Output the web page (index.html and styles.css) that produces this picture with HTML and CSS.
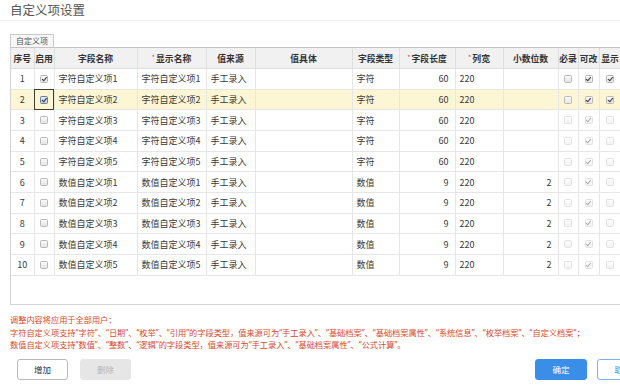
FILE: index.html
```html
<!DOCTYPE html>
<html lang="zh-CN">
<head>
<meta charset="utf-8">
<title>自定义项设置</title>
<link rel="stylesheet" href="styles.css">
</head>
<body>
<div class="page">
  <div class="title">自定义项设置</div>
  <div class="tabs"><span class="tab">自定义项</span></div>
  <div class="grid">
    <table class="tbl">
      <colgroup>
        <col class="c-no"><col class="c-en"><col class="c-name"><col class="c-disp"><col class="c-src">
        <col class="c-val"><col class="c-type"><col class="c-len"><col class="c-wid"><col class="c-dec">
        <col class="c-req"><col class="c-mod"><col class="c-show">
      </colgroup>
      <thead>
        <tr>
          <th>序号</th><th>启用</th><th>字段名称</th><th><span class="req">*</span>显示名称</th><th>值来源</th>
          <th>值具体</th><th>字段类型</th><th><span class="req">*</span>字段长度</th><th><span class="req">*</span>列宽</th><th>小数位数</th>
          <th>必录</th><th>可改</th><th>显示</th>
        </tr>
      </thead>
      <tbody>
        <tr>
          <td class="ctr">1</td><td class="ctr"><span class="cb on"></span></td><td>字符自定义项1</td><td>字符自定义项1</td><td>手工录入</td>
          <td></td><td>字符</td><td class="num">60</td><td>220</td><td class="num"></td>
          <td class="ctr"><span class="cb"></span></td><td class="ctr"><span class="cb on"></span></td><td class="ctr"><span class="cb on"></span></td>
        </tr>
        <tr class="sel">
          <td class="ctr">2</td><td class="ctr focus"><span class="cb on active"></span></td><td>字符自定义项2</td><td>字符自定义项2</td><td>手工录入</td>
          <td></td><td>字符</td><td class="num">60</td><td>220</td><td class="num"></td>
          <td class="ctr"><span class="cb"></span></td><td class="ctr"><span class="cb on"></span></td><td class="ctr"><span class="cb on"></span></td>
        </tr>
        <tr>
          <td class="ctr">3</td><td class="ctr"><span class="cb"></span></td><td>字符自定义项3</td><td>字符自定义项3</td><td>手工录入</td>
          <td></td><td>字符</td><td class="num">60</td><td>220</td><td class="num"></td>
          <td class="ctr"><span class="cb dis"></span></td><td class="ctr"><span class="cb on dis"></span></td><td class="ctr"><span class="cb dis"></span></td>
        </tr>
        <tr>
          <td class="ctr">4</td><td class="ctr"><span class="cb"></span></td><td>字符自定义项4</td><td>字符自定义项4</td><td>手工录入</td>
          <td></td><td>字符</td><td class="num">60</td><td>220</td><td class="num"></td>
          <td class="ctr"><span class="cb dis"></span></td><td class="ctr"><span class="cb on dis"></span></td><td class="ctr"><span class="cb dis"></span></td>
        </tr>
        <tr>
          <td class="ctr">5</td><td class="ctr"><span class="cb"></span></td><td>字符自定义项5</td><td>字符自定义项5</td><td>手工录入</td>
          <td></td><td>字符</td><td class="num">60</td><td>220</td><td class="num"></td>
          <td class="ctr"><span class="cb dis"></span></td><td class="ctr"><span class="cb on dis"></span></td><td class="ctr"><span class="cb dis"></span></td>
        </tr>
        <tr>
          <td class="ctr">6</td><td class="ctr"><span class="cb"></span></td><td>数值自定义项1</td><td>数值自定义项1</td><td>手工录入</td>
          <td></td><td>数值</td><td class="num">9</td><td>220</td><td class="num">2</td>
          <td class="ctr"><span class="cb dis"></span></td><td class="ctr"><span class="cb on dis"></span></td><td class="ctr"><span class="cb dis"></span></td>
        </tr>
        <tr>
          <td class="ctr">7</td><td class="ctr"><span class="cb"></span></td><td>数值自定义项2</td><td>数值自定义项2</td><td>手工录入</td>
          <td></td><td>数值</td><td class="num">9</td><td>220</td><td class="num">2</td>
          <td class="ctr"><span class="cb dis"></span></td><td class="ctr"><span class="cb on dis"></span></td><td class="ctr"><span class="cb dis"></span></td>
        </tr>
        <tr>
          <td class="ctr">8</td><td class="ctr"><span class="cb"></span></td><td>数值自定义项3</td><td>数值自定义项3</td><td>手工录入</td>
          <td></td><td>数值</td><td class="num">9</td><td>220</td><td class="num">2</td>
          <td class="ctr"><span class="cb dis"></span></td><td class="ctr"><span class="cb on dis"></span></td><td class="ctr"><span class="cb dis"></span></td>
        </tr>
        <tr>
          <td class="ctr">9</td><td class="ctr"><span class="cb"></span></td><td>数值自定义项4</td><td>数值自定义项4</td><td>手工录入</td>
          <td></td><td>数值</td><td class="num">9</td><td>220</td><td class="num">2</td>
          <td class="ctr"><span class="cb dis"></span></td><td class="ctr"><span class="cb on dis"></span></td><td class="ctr"><span class="cb dis"></span></td>
        </tr>
        <tr>
          <td class="ctr">10</td><td class="ctr"><span class="cb"></span></td><td>数值自定义项5</td><td>数值自定义项5</td><td>手工录入</td>
          <td></td><td>数值</td><td class="num">9</td><td>220</td><td class="num">2</td>
          <td class="ctr"><span class="cb dis"></span></td><td class="ctr"><span class="cb on dis"></span></td><td class="ctr"><span class="cb dis"></span></td>
        </tr>
      </tbody>
    </table>
  </div>
  <div class="notes">
    <p>调整内容将应用于全部用户：</p>
    <p>字符自定义项支持“字符”、“日期”、“枚举”、“引用”的字段类型，值来源可为“手工录入”、“基础档案”、“基础档案属性”、“系统信息”、“枚举档案”、“自定义档案”；</p>
    <p>数值自定义项支持“数值”、“整数”、“逻辑”的字段类型，值来源可为“手工录入”、“基础档案属性”、“公式计算”。</p>
  </div>
  <div class="footer">
    <div class="group">
      <button class="btn">增加</button>
      <button class="btn disabled">删除</button>
    </div>
    <div class="group">
      <button class="btn primary">确定</button>
      <button class="btn outline">取消</button>
    </div>
  </div>
</div>
</body>
</html>
```
FILE: styles.css
```css
html, body {
  margin: 0;
  padding: 0;
  overflow: hidden;
  background: #fff;
}
body {
  font-family: "Noto Sans CJK SC", "Noto Sans", sans-serif;
  color: #333;
}
.page {
  width: 660px;
}
.title {
  height: 20px;
  line-height: 20px;
  padding-left: 10px;
  font-size: 12.5px;
  color: #555;
  border-bottom: 1px solid #f0f0f0;
}
.tabs {
  margin-top: 13px;
  padding-left: 10px;
  display: flex;
}
.tab {
  height: 12px;
  line-height: 12px;
  padding: 0 5px;
  font-size: 8px;
  color: #555;
  background: #f7f7f7;
  border: 1px solid #c9c9c9;
  border-bottom: none;
}
.grid {
  margin-left: 10px;
  height: 256px;
  border: 1px solid #d4d4d4;
  border-top-color: #c4c4c4;
  overflow: hidden;
}
.tbl {
  border-collapse: collapse;
  table-layout: fixed;
  width: 610px;
  font-size: 9px;
}
.c-no { width: 23px; }
.c-en { width: 20px; }
.c-name { width: 83px; }
.c-disp { width: 69px; }
.c-src { width: 49px; }
.c-val { width: 97px; }
.c-type { width: 47px; }
.c-len { width: 56px; }
.c-wid { width: 48px; }
.c-dec { width: 55px; }
.c-req { width: 20px; }
.c-mod { width: 21px; }
.c-show { width: 22px; }
.tbl th {
  height: 20px;
  padding: 0;
  font-weight: bold;
  font-size: 8.8px;
  color: #333;
  background: #f1f1f1;
  border: 1px solid #dedede;
  border-top: none;
  text-align: center;
  white-space: nowrap;
  overflow: hidden;
}
.tbl th:first-child { border-left: none; }
.req {
  color: #f04040;
  font-size: 7px;
  font-weight: normal;
  vertical-align: 2px;
  margin-right: 1px;
}
.tbl td {
  height: 19.67px;
  padding: 0 3px 0 4px;
  border: 1px solid #e6e6e6;
  white-space: nowrap;
  overflow: hidden;
  color: #3a3a3a;
}
.tbl td:first-child { border-left: none; }
.tbl td.ctr {
  text-align: center;
  padding: 0;
}
.tbl td.num {
  text-align: right;
  padding-right: 6px;
}
.tbl tr.sel td {
  background: #fdf6d4;
}
.tbl td.focus {
  outline: 1px solid #3e3e30;
  outline-offset: -1px;
}
.cb {
  display: inline-block;
  box-sizing: border-box;
  width: 8px;
  height: 8px;
  border: 1px solid #b8b8b8;
  border-radius: 1.5px;
  background: linear-gradient(#fafafa, #e4e4e4);
  vertical-align: middle;
  position: relative;
  top: -1px;
}
.cb.on::after {
  content: "";
  position: absolute;
  left: 1.5px;
  top: 0px;
  width: 2px;
  height: 3.5px;
  border: solid #333;
  border-width: 0 1.4px 1.4px 0;
  transform: rotate(40deg);
}
.cb.active {
  border-color: #6d7f99;
  background: linear-gradient(#dfe8f5, #bccde6);
}
.cb.active::after {
  border-color: #1d2a44;
}
.cb.dis {
  opacity: 0.4;
}
.notes {
  margin-top: 9px;
  padding-left: 10px;
  font-family: "Noto Sans", "Noto Sans CJK SC", sans-serif;
  font-size: 8.2px;
  line-height: 12.6px;
  color: #d8482a;
  white-space: nowrap;
}
.notes p {
  margin: 0;
}
.footer {
  margin-top: 7px;
  padding: 0 11px 0 17px;
  display: flex;
  justify-content: space-between;
}
.group {
  display: flex;
  gap: 12px;
}
.group + .group {
  gap: 10px;
}
.btn {
  box-sizing: border-box;
  width: 51px;
  height: 21px;
  padding: 0;
  font-family: inherit;
  font-size: 8.5px;
  color: #333;
  background: #fff;
  border: 1px solid #b9b9b9;
  border-radius: 3px;
}
.btn.disabled {
  background: #e6e6e6;
  border-color: #e6e6e6;
  color: #b5b5b5;
}
.btn.primary {
  width: 52px;
  background: #3a8ee8;
  border-color: #3a8ee8;
  color: #fff;
}
.btn.outline {
  width: 52px;
  border-color: #7eb1ec;
  color: #3a8ee8;
}
```
